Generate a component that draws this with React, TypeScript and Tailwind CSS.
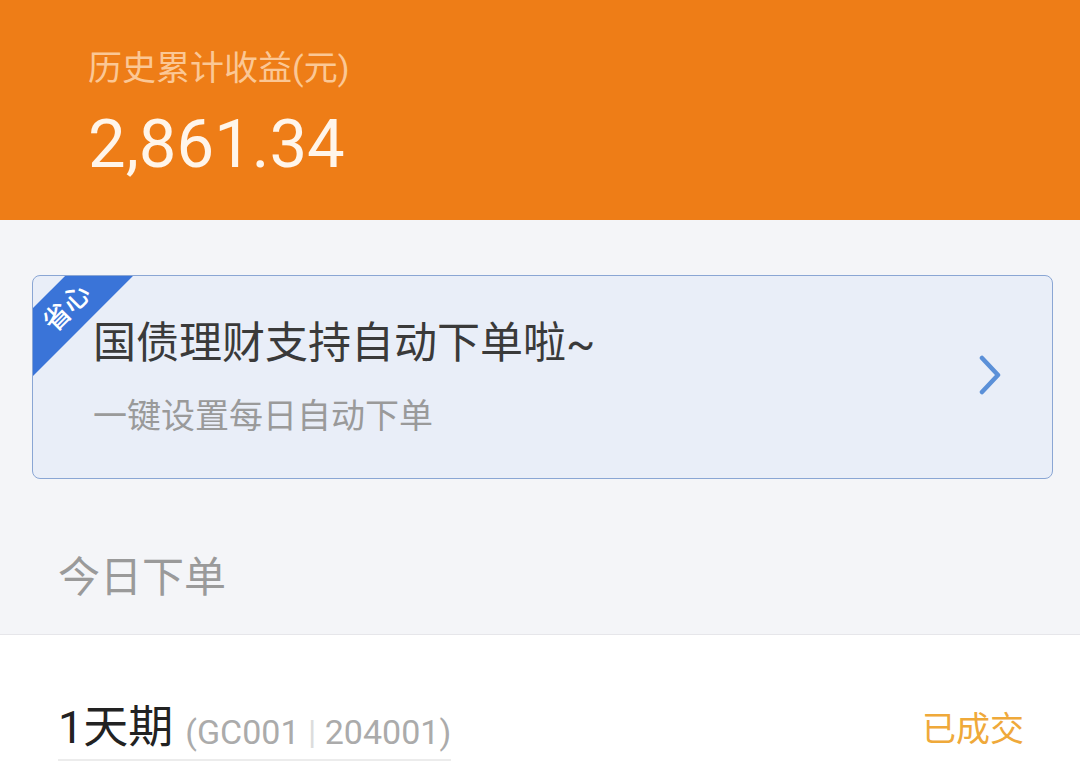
const font = { fontFamily: "Roboto, 'Noto Sans CJK SC', sans-serif" };

export default function App() {
  return (
    <div className="w-[1080px] h-[781px] overflow-hidden bg-[#f4f5f8]" style={font}>
      {/* header */}
      <div className="h-[220px] bg-[#ee7d17] pl-[88px] pt-[46px]">
        <div className="text-[34px] leading-[44px] text-[#fbc795]">历史累计收益(元)</div>
        <div className="mt-[14px] text-[67px] leading-[80px] text-[#fff5ea]">2,861.34</div>
      </div>

      {/* promo card */}
      <div className="pl-[32px] pr-[27px] pt-[55px]">
        <div className="relative h-[204px] overflow-hidden rounded-[8px] border border-[#8aa6d4] bg-[#e9eef8]">
          <div className="absolute left-[-66px] top-[8px] flex h-[48px] w-[200px] -rotate-45 items-center justify-center bg-[#3a74d8]">
            <span className="text-[27px] font-medium leading-none text-white">省心</span>
          </div>
          <div className="flex h-full items-center justify-between pl-[60px] pr-[50px]">
            <div>
              <div className="text-[43px] leading-[54px] text-[#3a3a3a]">国债理财支持自动下单啦~</div>
              <div className="mt-[24px] text-[34px] leading-[44px] text-[#9a9a9a]">一键设置每日自动下单</div>
            </div>
            <svg width="24" height="40" viewBox="0 0 24 40" fill="none" className="mb-[4px]">
              <polyline
                points="4,3 20,20 4,37"
                stroke="#5b90d8"
                strokeWidth="4.5"
                strokeLinecap="round"
                strokeLinejoin="round"
              />
            </svg>
          </div>
        </div>
      </div>

      {/* section title */}
      <div className="h-[156px] border-b border-[#e6e6ea] pl-[58px] pt-[72px]">
        <div className="text-[42px] leading-[54px] text-[#9a9a9a]">今日下单</div>
      </div>

      {/* list */}
      <div className="h-[200px] bg-white pl-[58px] pr-[56px] pt-[66px]">
        <div className="flex items-end justify-between">
          <div className="inline-flex items-end border-b-2 border-[#ececec] pb-[4px]">
            <span className="text-[45px] leading-[54px] text-[#222]">1天期</span>
            <span className="ml-[12px] text-[34px] leading-[46px] text-[#ababab]">
              (GC001 <span className="text-[#dcdcdc]">|</span> 204001)
            </span>
          </div>
          <span className="mb-[10px] text-[34px] leading-[44px] text-[#efa93a]">已成交</span>
        </div>
      </div>
    </div>
  );
}
